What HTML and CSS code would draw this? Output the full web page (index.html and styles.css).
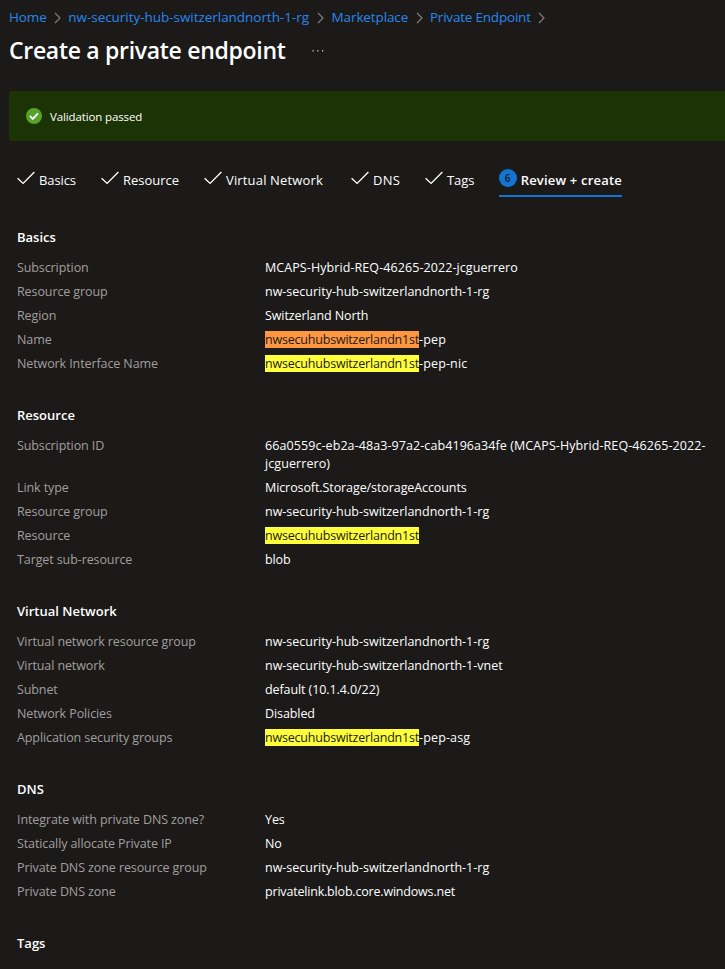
FILE: index.html
```html
<!DOCTYPE html>
<html lang="en">
<head>
<meta charset="utf-8">
<title>Create a private endpoint</title>
<link rel="stylesheet" href="styles.css">
</head>
<body>
<svg width="0" height="0" class="defs">
  <symbol id="chevron" viewBox="0 0 7 12"><path d="M1 1l5 5-5 5" fill="none" stroke="#85827f" stroke-width="1.1"/></symbol>
  <symbol id="check" viewBox="0 0 18 14"><path d="M.6 7.2l5.5 5.2L17.4 1.1" fill="none" stroke="#fff" stroke-width="1.35"/></symbol>
</svg>
<nav class="crumbs">
  <a class="c-home">Home</a><svg class="chev"><use href="#chevron"/></svg>
  <a class="c-group">nw-security-hub-switzerlandnorth-1-rg</a><svg class="chev"><use href="#chevron"/></svg>
  <a class="c-market">Marketplace</a><svg class="chev"><use href="#chevron"/></svg>
  <a class="c-endpoint">Private Endpoint</a><svg class="chev"><use href="#chevron"/></svg>
</nav>
<header class="title">
  <h1>Create a private endpoint</h1>
  <svg class="more" viewBox="0 0 12 2"><path d="M.5 0h1.2v1.5H.5zM5.3 0h1.2v1.5H5.3zM10 0h1.2v1.5H10z" fill="#c8c6c4"/></svg>
</header>
<div class="banner">
  <svg viewBox="0 0 16 16"><circle cx="8" cy="8" r="8" fill="#57a228"/><path d="M3.9 7.9l2.9 3 5.2-5.5" fill="none" stroke="#fff" stroke-width="1.8"/></svg>
  <span>Validation passed</span>
</div>
<div class="tabs">
  <div class="tab t-basics"><svg><use href="#check"/></svg>Basics</div>
  <div class="tab t-resource"><svg><use href="#check"/></svg>Resource</div>
  <div class="tab t-vnet"><svg><use href="#check"/></svg>Virtual Network</div>
  <div class="tab t-dns"><svg><use href="#check"/></svg>DNS</div>
  <div class="tab t-tags"><svg><use href="#check"/></svg>Tags</div>
  <div class="tab active"><span class="step">6</span>Review + create</div>
</div>
<main>
  <section>
    <h2>Basics</h2>
    <dl>
      <dt>Subscription</dt><dd class="wide">MCAPS-Hybrid-REQ-46265-2022-jcguerrero</dd>
      <dt>Resource group</dt><dd class="plain">nw-security-hub-switzerlandnorth-1-rg</dd>
      <dt>Region</dt><dd>Switzerland North</dd>
      <dt>Name</dt><dd class="suffixed"><mark class="current">nwsecuhubswitzerlandn1st</mark>-pep</dd>
      <dt>Network Interface Name</dt><dd class="suffixed"><mark>nwsecuhubswitzerlandn1st</mark>-pep-nic</dd>
    </dl>
  </section>
  <section>
    <h2>Resource</h2>
    <dl>
      <dt>Subscription ID</dt><dd class="wide">66a0559c-eb2a-48a3-97a2-cab4196a34fe (MCAPS-Hybrid-REQ-46265-2022-jcguerrero)</dd>
      <dt>Link type</dt><dd>Microsoft.Storage/storageAccounts</dd>
      <dt>Resource group</dt><dd class="plain">nw-security-hub-switzerlandnorth-1-rg</dd>
      <dt>Resource</dt><dd><mark>nwsecuhubswitzerlandn1st</mark></dd>
      <dt>Target sub-resource</dt><dd>blob</dd>
    </dl>
  </section>
  <section>
    <h2>Virtual Network</h2>
    <dl>
      <dt>Virtual network resource group</dt><dd class="plain">nw-security-hub-switzerlandnorth-1-rg</dd>
      <dt>Virtual network</dt><dd class="plain">nw-security-hub-switzerlandnorth-1-vnet</dd>
      <dt>Subnet</dt><dd>default (10.1.4.0/22)</dd>
      <dt>Network Policies</dt><dd>Disabled</dd>
      <dt>Application security groups</dt><dd class="suffixed"><mark>nwsecuhubswitzerlandn1st</mark>-pep-asg</dd>
    </dl>
  </section>
  <section>
    <h2>DNS</h2>
    <dl>
      <dt>Integrate with private DNS zone?</dt><dd>Yes</dd>
      <dt>Statically allocate Private IP</dt><dd>No</dd>
      <dt>Private DNS zone resource group</dt><dd class="plain">nw-security-hub-switzerlandnorth-1-rg</dd>
      <dt>Private DNS zone</dt><dd class="tight">privatelink.blob.core.windows.net</dd>
    </dl>
  </section>
  <section>
    <h2>Tags</h2>
  </section>
</main>
</body>
</html>
```
FILE: styles.css
```css
* { box-sizing: border-box; }
html, body { height: 969px; overflow: hidden; }
body {
  margin: 0;
  background: #1b1a19;
  color: #fff;
  font: 12.5px/18px "Open Sans", "Noto Sans", sans-serif;
}
svg { display: block; flex: none; }
.defs { position: absolute; }

.crumbs {
  display: flex;
  align-items: center;
  height: 34px;
  padding-left: 9px;
  font-size: 13.5px;
  white-space: nowrap;
}
.crumbs a { color: #2886ed; letter-spacing: -.12px; }
.crumbs .c-group { letter-spacing: -.04px; }
.crumbs .c-endpoint { letter-spacing: -.2px; }
.c-home { width: 37px; }
.c-group { width: 241px; }
.c-market { width: 76px; }
.c-endpoint { width: 100.5px; }
.chev { width: 7px; height: 12px; margin: 2px 7.3px 0 8px; }

.title {
  display: flex;
  align-items: center;
  height: 32px;
  padding-left: 9px;
}
h1 {
  width: 303px;
  margin: 0;
  font-size: 23px;
  line-height: 32px;
  font-weight: 600;
  letter-spacing: -.3px;
  white-space: nowrap;
}
.more { width: 12px; height: 2px; margin-top: 2px; }

.banner {
  display: flex;
  align-items: center;
  height: 50px;
  margin: 25px 0 0 9px;
  padding-left: 17px;
  gap: 8px;
  border-radius: 2px 0 0 2px;
  background: #1c3306;
  font-size: 11.5px;
  letter-spacing: -.13px;
}
.banner svg { width: 16px; height: 16px; }
.banner span { padding-top: 1px; }

.tabs {
  display: flex;
  height: 36px;
  margin: 21px 0 0 17px;
  font-size: 13px;
}
.tab {
  display: flex;
  align-items: center;
  height: 35px;
  gap: 4px;
  white-space: nowrap;
}
.tab svg { width: 18px; height: 14px; margin-top: -3px; }
.t-basics { width: 84px; letter-spacing: -.1px; }
.t-resource { width: 103px; }
.t-vnet { width: 147px; letter-spacing: .16px; }
.t-dns { width: 74px; letter-spacing: .3px; }
.t-tags { width: 74px; letter-spacing: -.1px; }
.active {
  width: 123px;
  border-bottom: 2px solid #1374d4;
  font-weight: 600;
  letter-spacing: .2px;
  padding-top: 2px;
}
.step {
  width: 18px;
  height: 18px;
  margin-top: -4px;
  border-radius: 50%;
  background: #1374d4;
  color: #1b1a19;
  font-size: 10px;
  font-weight: 600;
  line-height: 18px;
  text-align: center;
}

main { padding: 30px 0 0 17px; }
section { margin-bottom: 33px; }
h2 {
  margin: 0 0 13px;
  font-size: 13px;
  line-height: 18px;
  font-weight: 600;
}
dl {
  display: grid;
  grid-template-columns: 248px 450px;
  row-gap: 6px;
  margin: 0;
}
dt { color: #a19f9d; letter-spacing: -.1px; }
dd { margin: 0; letter-spacing: -.09px; }
.wide { letter-spacing: .08px; }
.plain { letter-spacing: 0; }
.suffixed { letter-spacing: .14px; }
.tight { letter-spacing: -.19px; }
mark { background: #ffff3c; color: #1b1a19; letter-spacing: -.2px; }
mark.current { background: #ff9640; }
```
